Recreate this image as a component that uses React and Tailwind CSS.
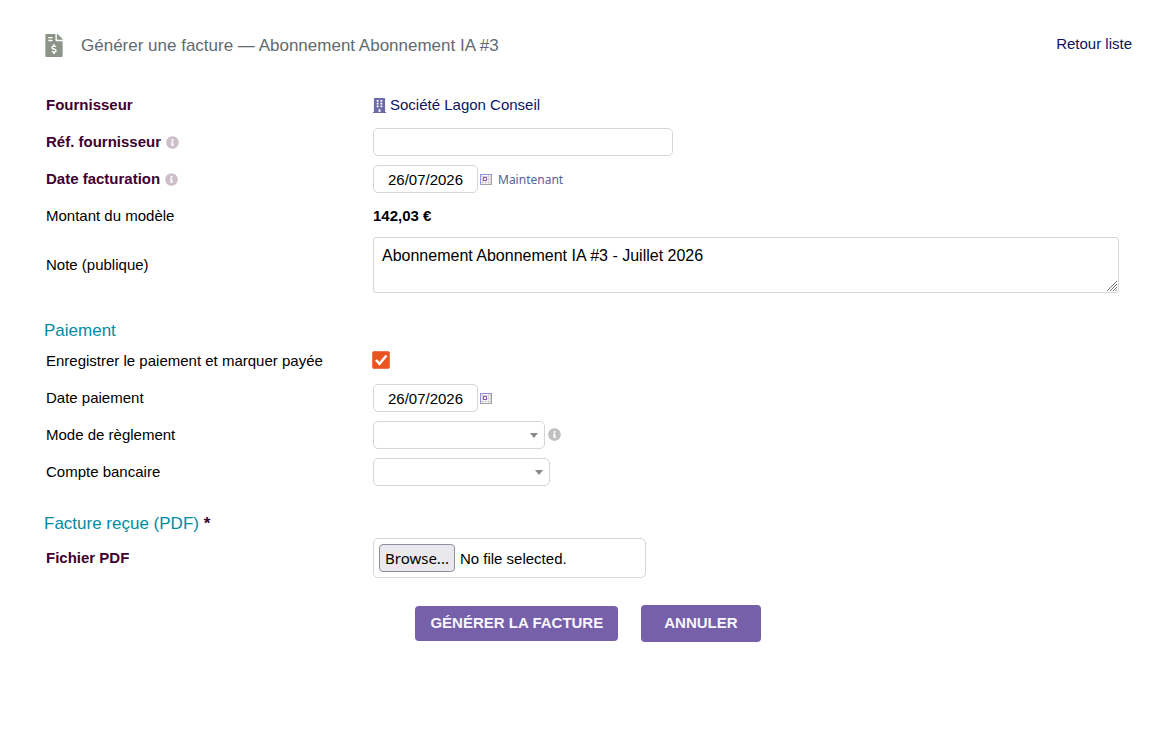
import React, { useState } from 'react';
import { FaBuilding, FaFileInvoiceDollar, FaInfoCircle } from 'react-icons/fa';

const inputClass = 'h-7 rounded-[5px] border border-[#d6d6d6] bg-white focus:outline-none';

const Info = ({ title, className }) => (
  <span title={title} className={className}>
    <FaInfoCircle className="size-[13px]" />
  </span>
);

const Row = ({ label, htmlFor, required, info, className = 'pt-1 pb-[5px]', children }) => (
  <div className={`grid grid-cols-[327px_1fr] items-center ${className}`}>
    <div className={`flex items-center gap-[5px] pl-0.5 ${required ? 'font-bold text-[#3f0030]' : 'text-black'}`}>
      <label htmlFor={htmlFor}>{label}</label>
      {info && <Info title={info} className="text-[#cfbfcb]" />}
    </div>
    <div className="flex min-h-7 items-center pl-0.5">{children}</div>
  </div>
);

const SectionTitle = ({ children }) => (
  <h2 className="pt-[21px] text-[17px] leading-6 text-[#008ba3]">{children}</h2>
);

const CalendarButton = () => (
  <button type="button" aria-label="Choisir une date" className="ml-0.5">
    <svg width="12" height="11" viewBox="0 0 12 11" shapeRendering="crispEdges" fill="none">
      <rect width="12" height="11" fill="#fff" />
      <path d="M2.5 1v9M8.5 1v9M10.5 1v9M1 2.5h10M1 5.5h2M7 5.5h4M1 8.5h10M5.500 7v3" stroke="#d9d3d3" />
      <path d="M11.5 0v11M0 10.5h12" stroke="#a3a3a3" />
      <path d="M0.5 11V0.5H12" stroke="#9090e0" />
      <rect x="3.5" y="3.5" width="3" height="3" stroke="#8f5bb0" />
    </svg>
  </button>
);

const DateInput = ({ id, value, onChange }) => (
  <input
    id={id}
    type="text"
    value={value}
    onChange={(e) => onChange(e.target.value)}
    className={`${inputClass} w-[105px] text-center`}
  />
);

const Select = ({ id, className }) => (
  <div className={`relative ${className}`}>
    <select id={id} className={`${inputClass} w-full appearance-none px-2`}>
      <option value=""></option>
    </select>
    <svg
      className="pointer-events-none absolute top-3 right-[7px]"
      width="8"
      height="5"
      viewBox="0 0 8 5"
      fill="#888"
    >
      <path d="M0 0h8L4 5z" />
    </svg>
  </div>
);

const App = () => {
  const [invoiceDate, setInvoiceDate] = useState('26/07/2026');
  const [paymentDate, setPaymentDate] = useState('26/07/2026');
  const [note, setNote] = useState('Abonnement Abonnement IA #3 - Juillet 2026');
  const [paid, setPaid] = useState(true);
  const [fileName, setFileName] = useState('');

  return (
    <main className="min-h-screen bg-white pt-8 pr-[39px] pb-8 pl-11 font-['Liberation_Sans',Arial,sans-serif] text-[15px] leading-5 text-black">
      <header className="flex items-start justify-between pb-7">
        <div className="flex items-center gap-[18px] pl-px">
          <FaFileInvoiceDollar className="h-[23px] w-[18px] text-[#8c9488]" />
          <h1 className="text-[17px] leading-[27px] text-[#5f6b70]">
            Générer une facture — Abonnement Abonnement IA #3
          </h1>
        </div>
        <a href="#liste" className="pt-0.5 text-[#0a1464]">
          Retour liste
        </a>
      </header>

      <form onSubmit={(e) => e.preventDefault()}>
        <Row label="Fournisseur" required>
          <a href="#fournisseur" className="flex items-center gap-1 text-[#0a1464]">
            <FaBuilding className="h-[15px] w-[13px] text-[#6c6aa8]" />
            Société Lagon Conseil
          </a>
        </Row>
        <Row label="Réf. fournisseur" htmlFor="ref" required info="Référence de la facture fournisseur">
          <input id="ref" type="text" className={`${inputClass} w-[300px] px-2`} />
        </Row>
        <Row label="Date facturation" htmlFor="date" required info="Date de la facture">
          <DateInput id="date" value={invoiceDate} onChange={setInvoiceDate} />
          <CalendarButton />
          <button
            type="button"
            onClick={() => setInvoiceDate(new Date().toLocaleDateString('fr-FR'))}
            className="ml-1.5 pt-px font-['Noto_Sans',sans-serif] text-xs text-[#5c5c98]"
          >
            Maintenant
          </button>
        </Row>
        <Row label="Montant du modèle">
          <strong>142,03 €</strong>
        </Row>
        <Row label="Note (publique)" htmlFor="note" className="pt-0.5 pb-[5px]">
          <div className="relative mr-[13px] flex flex-1">
            <textarea
              id="note"
              value={note}
              onChange={(e) => setNote(e.target.value)}
              className="h-14 w-full resize-none rounded-[3px] border border-[#d6d6d6] px-2 py-2 text-base leading-5 focus:outline-none"
            />
            <svg
              className="pointer-events-none absolute right-0.5 bottom-0.5"
              width="10"
              height="10"
              viewBox="0 0 10 10"
              stroke="#777"
            >
              <path d="M0 10L10 0M3 10L10 3M6 10L10 6M8.500 10L10 8.500" />
            </svg>
          </div>
        </Row>

        <SectionTitle>Paiement</SectionTitle>
        <Row label="Enregistrer le paiement et marquer payée" htmlFor="paid">
          <span className="relative -ml-px flex pb-0.5">
            <input
              id="paid"
              type="checkbox"
              checked={paid}
              onChange={(e) => setPaid(e.target.checked)}
              className="peer size-[18px] appearance-none rounded-[2px] border border-[#999] checked:border-[#f0764c] checked:bg-[#e95420]"
            />
            <svg
              className="pointer-events-none absolute top-0 left-0 hidden peer-checked:block"
              width="18"
              height="18"
              viewBox="0 0 18 18"
              fill="none"
              stroke="#fff"
              strokeWidth="2.500"
            >
              <path d="M4 9l3.500 3.800L14.500 4.500" />
            </svg>
          </span>
        </Row>
        <Row label="Date paiement" htmlFor="payment-date">
          <DateInput id="payment-date" value={paymentDate} onChange={setPaymentDate} />
          <CalendarButton />
        </Row>
        <Row label="Mode de règlement" htmlFor="mode">
          <Select id="mode" className="w-[172px]" />
          <Info title="Mode de règlement" className="ml-[3px] pb-0.5 text-[#bfbfbf]" />
        </Row>
        <Row label="Compte bancaire" htmlFor="account">
          <Select id="account" className="w-[177px]" />
        </Row>

        <SectionTitle>
          Facture reçue (PDF) <span className="font-bold text-[#3f0030]">*</span>
        </SectionTitle>
        <Row label="Fichier PDF" htmlFor="pdf" required className="pt-0.5">
          <label
            htmlFor="pdf"
            className="flex h-10 w-[273px] items-center gap-[5px] rounded-[5px] border border-[#d6d6d6] pl-[5px]"
          >
            <input
              id="pdf"
              type="file"
              accept="application/pdf"
              onChange={(e) => setFileName(e.target.files[0]?.name ?? '')}
              className="sr-only"
            />
            <span className="h-7 rounded border border-[#8f8f9d] bg-[#e9e9ed] px-[5px] font-['Noto_Sans',sans-serif] leading-[26px]">
              Browse...
            </span>
            <span className="pt-px">{fileName || 'No file selected.'}</span>
          </label>
        </Row>

        <div className="flex items-center justify-center gap-[23px] pt-[27px]">
          <button
            type="submit"
            className="h-[35px] rounded bg-[#7560a9] px-[15px] pb-px font-bold text-[#f8f6ff] uppercase"
          >
            Générer la facture
          </button>
          <button
            type="button"
            className="h-[37px] rounded bg-[#7560a9] px-[23px] pb-px font-bold text-[#f8f6ff] uppercase"
          >
            Annuler
          </button>
        </div>
      </form>
    </main>
  );
};

export default App;
